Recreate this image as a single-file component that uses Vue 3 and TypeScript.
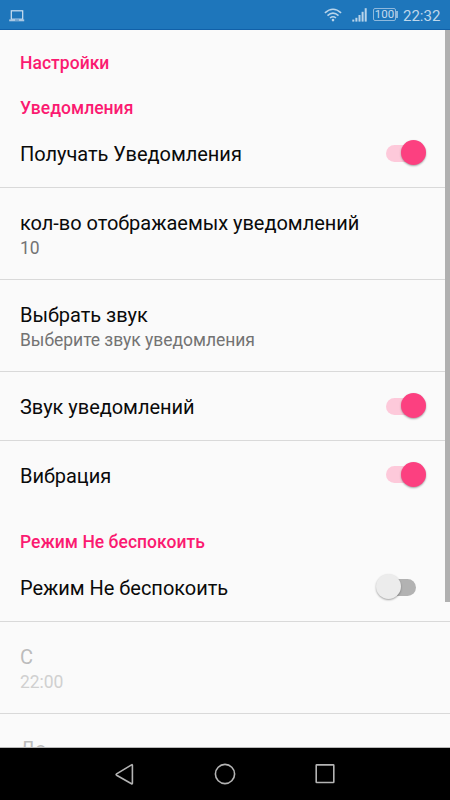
<script setup lang="ts">
import { ref } from 'vue'

interface Row {
  kind: 'category' | 'item'
  title: string
  summary?: string
  toggle?: boolean
  disabled?: boolean
  divider?: boolean
  variant?: string
}

const rows = ref<Row[]>([
  { kind: 'category', title: 'Настройки', variant: 'first' },
  { kind: 'category', title: 'Уведомления' },
  { kind: 'item', title: 'Получать Уведомления', toggle: true, divider: true },
  { kind: 'item', title: 'кол-во отображаемых уведомлений', summary: '10', divider: true },
  { kind: 'item', title: 'Выбрать звук', summary: 'Выберите звук уведомления', divider: true },
  { kind: 'item', title: 'Звук уведомлений', toggle: true, divider: true },
  { kind: 'item', title: 'Вибрация', toggle: true },
  { kind: 'category', title: 'Режим Не беспокоить', variant: 'section' },
  { kind: 'item', title: 'Режим Не беспокоить', toggle: false, divider: true },
  { kind: 'item', title: 'С', summary: '22:00', disabled: true, divider: true },
  { kind: 'item', title: 'До', disabled: true },
])

function flip(row: Row) {
  if (row.toggle !== undefined) row.toggle = !row.toggle
}
</script>

<template>
  <div class="screen">
    <header class="status">
      <svg class="laptop" width="16" height="12" viewBox="0 0 16 12">
        <rect x="2.3" y="0.8" width="11.4" height="8.4" fill="none" stroke="#cfe2f2" stroke-width="1.2" />
        <rect x="0.2" y="9.4" width="15" height="1.9" fill="#a9c8e3" />
        <rect x="6" y="9.6" width="4" height="0.9" fill="#3f83bd" />
      </svg>
      <div class="indicators">
        <svg class="wifi" width="18" height="14" viewBox="0 0 18 14" fill="none" stroke="#b9d4ea" stroke-width="1.6">
          <path d="M0.9 4.9 Q9 -2.4 17.1 4.9" />
          <path d="M3.5 7.6 Q9 2.8 14.5 7.6" />
          <path d="M6 10 Q9 7.6 12 10" />
          <circle cx="9" cy="12.1" r="1.3" fill="#b9d4ea" stroke="none" />
        </svg>
        <svg class="signal" width="16" height="14" viewBox="0 0 16 14" fill="#b9d4ea">
          <rect x="0.3" y="11.6" width="2" height="2" />
          <rect x="3.4" y="9.8" width="2" height="3.8" />
          <rect x="6.5" y="7" width="2" height="6.6" />
          <rect x="9.6" y="3.8" width="2" height="9.8" />
          <rect x="12.7" y="0.2" width="2" height="13.4" />
        </svg>
        <span class="battery"><span class="level">100</span></span>
        <span class="clock">22:32</span>
      </div>
    </header>

    <main class="list">
      <template v-for="(row, i) in rows" :key="i">
        <h2 v-if="row.kind === 'category'" class="category" :class="row.variant">{{ row.title }}</h2>
        <section
          v-else
          class="item"
          :class="{ tall: row.toggle === undefined, divider: row.divider, disabled: row.disabled }"
          @click="flip(row)"
        >
          <div class="text">
            <div class="title">{{ row.title }}</div>
            <div v-if="row.summary" class="summary">{{ row.summary }}</div>
          </div>
          <div v-if="row.toggle !== undefined" class="switch" :class="{ on: row.toggle }">
            <span class="thumb"></span>
          </div>
        </section>
      </template>
      <div class="scrollbar"></div>
    </main>

    <nav class="nav">
      <svg width="24" height="24" viewBox="0 0 24 24">
        <path d="M19.4 3.2 V21.3 Q19.4 22.3 18.5 21.8 L3.6 13.2 Q2.6 12.5 3.6 11.8 L18.5 2.9 Q19.4 2.3 19.4 3.2 Z" />
      </svg>
      <svg width="24" height="24" viewBox="0 0 24 24">
        <circle cx="12" cy="12" r="9.6" />
      </svg>
      <svg width="24" height="24" viewBox="0 0 24 24">
        <rect x="3.2" y="2.9" width="17.6" height="17.6" rx="0.5" />
      </svg>
    </nav>
  </div>
</template>

<style>
body {
  margin: 0;
  overflow: hidden;
}
</style>

<style scoped>
.screen {
  width: 450px;
  height: 800px;
  display: flex;
  flex-direction: column;
  overflow: hidden;
  background: #fafafa;
  font-family: Roboto, "Noto Sans", sans-serif;
}
.status {
  flex: none;
  box-sizing: border-box;
  height: 30px;
  padding: 0 10px 0 9px;
  display: flex;
  align-items: center;
  justify-content: space-between;
  background: #1e76bb;
  border-bottom: 1px solid #1160a8;
}
.laptop {
  margin-top: 2px;
}
.indicators {
  display: flex;
  align-items: center;
}
.wifi {
  margin-right: 10px;
}
.signal {
  margin-right: 5px;
}
.battery {
  position: relative;
  box-sizing: border-box;
  width: 23px;
  height: 13px;
  margin-right: 7px;
  border: 1px solid #8fb9dd;
  border-radius: 2px;
  display: flex;
  align-items: center;
  justify-content: center;
}
.battery::after {
  content: "";
  position: absolute;
  right: -3px;
  top: 2px;
  width: 2px;
  height: 7px;
  background: #8fb9dd;
}
.level {
  font-size: 11.5px;
  line-height: 11px;
  color: #c4daed;
}
.clock {
  width: 37px;
  font-size: 15px;
  line-height: 20px;
  white-space: nowrap;
  color: #bfd7eb;
  margin-top: 2px;
}
.list {
  position: relative;
  box-sizing: border-box;
  flex: 1;
  min-height: 0;
  overflow: hidden;
  border-bottom: 1px solid #b8b8b8;
}
.category {
  box-sizing: border-box;
  height: 33px;
  margin: 0;
  padding: 12px 20px 0;
  font-size: 17.5px;
  line-height: 21px;
  font-weight: 500;
  letter-spacing: 0.03px;
  color: #fb1a71;
}
.category.first {
  height: 56px;
  padding-top: 23px;
}
.category.section {
  height: 45px;
  padding-top: 24px;
}
.item {
  box-sizing: border-box;
  height: 67px;
  padding: 0 20px;
  display: flex;
  align-items: center;
  justify-content: space-between;
}
.item.divider {
  height: 69px;
  border-bottom: 1px solid #d9d9d9;
}
.item.tall {
  height: 92px;
  align-items: flex-start;
  padding-top: 20px;
}
.text {
  padding-top: 3px;
}
.title {
  font-size: 20px;
  line-height: 25px;
  letter-spacing: -0.03px;
  color: #0a0a0a;
  white-space: nowrap;
}
.summary {
  font-size: 17.5px;
  line-height: 21px;
  margin-top: 2px;
  letter-spacing: -0.04px;
  color: #737373;
}
.disabled .title {
  color: #bcbcbc;
}
.disabled .summary {
  color: #d0d0d0;
}
.switch {
  width: 54px;
  height: 34px;
  display: flex;
  align-items: center;
  position: relative;
}
.switch::before {
  content: "";
  width: 30px;
  height: 17px;
  margin-left: 10px;
  border-radius: 9px;
  background: #b2b2b2;
}
.switch.on::before {
  background: #fdc9da;
}
.thumb {
  position: absolute;
  left: 0;
  top: 4px;
  width: 25px;
  height: 25px;
  border-radius: 50%;
  background: #ececec;
  box-shadow: 0 1px 2px rgba(0, 0, 0, 0.35);
}
.on .thumb {
  left: 25px;
  background: #fc4080;
}
.scrollbar {
  position: absolute;
  right: 0;
  top: 0;
  width: 5px;
  height: 572px;
  background: #b0b0b0;
}
.nav {
  flex: none;
  box-sizing: border-box;
  height: 52px;
  padding: 0 113px;
  display: flex;
  align-items: center;
  justify-content: space-between;
  background: #000;
}
.nav svg {
  fill: none;
  stroke: #b4b4b4;
  stroke-width: 1.6;
}
</style>
